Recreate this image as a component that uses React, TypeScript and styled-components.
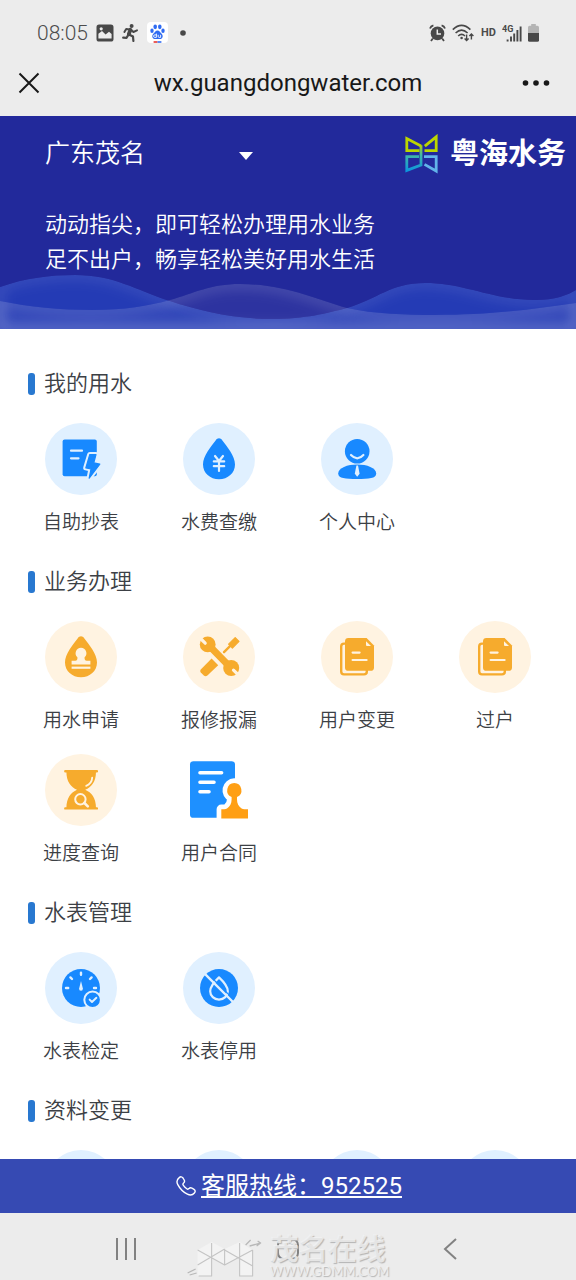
import React from 'react';
import styled, { createGlobalStyle } from 'styled-components';

const BLUE = '#1889ff';
const BLUE_BG = '#e0f0ff';
const ORANGE = '#f6ab2d';
const ORANGE_BG = '#fff3e1';

const GlobalStyle = createGlobalStyle`
  * { box-sizing: border-box; }
  body {
    margin: 0;
    background: #fff;
    color: #3c4045;
    font-family: Roboto, "Noto Sans CJK SC", sans-serif;
  }
  button, select { font: inherit; color: inherit; background: none; border: 0; padding: 0; margin: 0; }
  svg { display: block; }
`;

const Screen = styled.div`
  display: flex;
  flex-direction: column;
  height: 100vh;
  overflow: hidden;
`;

const StatusBar = styled.div`
  display: flex;
  justify-content: space-between;
  align-items: center;
  height: 50px;
  padding: 15px 37px 0;
  background: #ececec;
  color: #4c4c4c;
`;

const StatusGroup = styled.div<{ $gap: number }>`
  display: flex;
  align-items: center;
  gap: ${(p) => p.$gap}px;
`;

const Clock = styled.time`
  font-size: 21px;
  line-height: 24px;
  font-weight: 350;
`;

const HdLabel = styled.span`
  font-size: 11px;
  line-height: 16px;
  font-weight: 700;
`;

const TitleBar = styled.header`
  display: grid;
  grid-template-columns: 64px 1fr 64px;
  align-items: center;
  height: 66px;
  background: #ececec;
  color: #181818;
`;

const SiteTitle = styled.h1`
  margin: 0;
  font-size: 24px;
  line-height: 32px;
  font-weight: 400;
  text-align: center;
`;

const IconButton = styled.button`
  display: flex;
  align-items: center;
  justify-content: center;
`;

const CloseButton = styled(IconButton)`
  justify-content: flex-start;
  padding-left: 17px;
`;

const MoreButton = styled(IconButton)`
  justify-content: flex-end;
  padding-right: 26px;
`;

const Banner = styled.section`
  position: relative;
  height: 213px;
  flex-shrink: 0;
  padding: 15px 10px 0 45px;
  background: #22299b;
  color: #fff;
`;

const BannerTop = styled.div`
  display: flex;
  align-items: center;
  justify-content: space-between;
  height: 46px;
`;

const CityPicker = styled.label`
  display: grid;
  grid-template-columns: 208px;
  align-items: center;
  justify-items: end;
  & > * { grid-area: 1 / 1; }
  & > svg { margin-top: 4px; }
`;

const CitySelect = styled.select`
  width: 100%;
  appearance: none;
  font-size: 25px;
  line-height: 36px;
  font-weight: 350;
`;

const Brand = styled.div`
  display: flex;
  align-items: center;
  gap: 12px;
  font-size: 29px;
  line-height: 40px;
  font-weight: 700;
`;

const Slogan = styled.p`
  margin: 30px 0 0;
  font-size: 22px;
  line-height: 35px;
  font-weight: 350;
`;

const Waves = styled.svg`
  position: absolute;
  left: 0;
  bottom: 0;
  width: 100%;
  height: 57px;
`;

const Content = styled.main`
  flex: 1;
  min-height: 0;
  overflow: hidden;
  padding: 29px 12px 0;
`;

const SectionTitle = styled.h2`
  display: flex;
  align-items: center;
  gap: 9px;
  margin: 0;
  padding: 10px 16px 23px;
  font-size: 22px;
  line-height: 32px;
  font-weight: 350;
  &::before {
    content: "";
    width: 7px;
    height: 22px;
    border-radius: 3px;
    background: #2878d0;
  }
`;

const ServiceGrid = styled.div`
  display: grid;
  grid-template-columns: repeat(4, 1fr);
`;

const Service = styled.button`
  display: flex;
  flex-direction: column;
  align-items: center;
  gap: 14px;
  height: 133px;
  font-size: 19px;
  line-height: 28px;
  font-weight: 350;
`;

const Disc = styled.span<{ $bg: string }>`
  width: 72px;
  height: 72px;
  border-radius: 50%;
  background: ${(p) => p.$bg};
`;

const Hotline = styled.footer`
  display: flex;
  align-items: center;
  justify-content: center;
  gap: 5px;
  height: 54px;
  flex-shrink: 0;
  padding-left: 2px;
  background: #364ab3;
  color: #fff;
`;

const HotlineLink = styled.a`
  color: inherit;
  font-size: 24px;
  line-height: 32px;
  font-weight: 400;
  text-decoration: underline;
  text-decoration-thickness: 2px;
  text-underline-offset: 2px;
  text-decoration-skip-ink: none;
`;

const NavBar = styled.nav`
  position: relative;
  display: grid;
  grid-template-columns: repeat(3, 1fr);
  height: 67px;
  flex-shrink: 0;
  padding: 4px 45px 0;
  background: #ececec;
`;

const Watermark = styled.div`
  position: absolute;
  left: 50%;
  bottom: 2px;
  transform: translateX(-50%);
  display: flex;
  align-items: flex-end;
  gap: 4px;
  color: rgba(244, 244, 244, 0.75);
  text-shadow: 1px 1px 1px #b4b4b4;
  pointer-events: none;
`;

const WatermarkText = styled.div`
  display: flex;
  flex-direction: column;
  font-size: 29px;
  line-height: 28px;
  font-weight: 700;
  white-space: nowrap;
`;

const WatermarkUrl = styled.span`
  font-family: Lato, sans-serif;
  font-size: 13px;
  line-height: 14px;
  font-weight: 400;
`;

const Glyph = ({ children }: { children: React.ReactNode }) => (
  <svg width="72" height="72" viewBox="0 0 72 72" fill="none" strokeLinecap="round" strokeLinejoin="round" aria-hidden="true">
    {children}
  </svg>
);

const DROP = 'M36 15.3C37.3 15.3 38.3 16 39.2 17.2C44 23.5 52 33 52 41.5C52 50 44.8 56.3 36 56.3S20 50 20 41.5C20 33 28 23.5 32.8 17.2C33.7 16 34.7 15.3 36 15.3Z';
const BOLT = 'M44.8 31.5H51L48.8 39.8L54.8 41.2L44.2 55.2L46 46L40.8 44.8Z';

const ReadMeterIcon = () => (
  <Glyph>
    <rect x="17.6" y="16.6" width="34.2" height="36.6" rx="2" fill={BLUE} />
    <path d="M26 27.7H37M26 35.3H33.5" stroke={BLUE_BG} strokeWidth="2.2" />
    <path d={BOLT} stroke={BLUE_BG} strokeWidth="5.2" fill={BLUE_BG} />
    <path d={BOLT} fill={BLUE} stroke={BLUE} strokeWidth="1.2" />
  </Glyph>
);

const BillIcon = () => (
  <Glyph>
    <path d={DROP} fill={BLUE} />
    <path d="M32 33L36 38L40 33M30.8 38.4H41.2M30.8 43.2H41.2M36 38V48" stroke={BLUE_BG} strokeWidth="2.2" />
  </Glyph>
);

const PersonIcon = () => (
  <Glyph>
    <circle cx="36.2" cy="28.2" r="12.3" fill={BLUE} />
    <path d="M30 32Q36.3 38.6 42.4 32" stroke={BLUE_BG} strokeWidth="2.2" />
    <path d="M36.2 41.6C46 41.6 55.2 45 55.2 50.5C55.2 55.4 48 56 36.2 56S17.2 55.4 17.2 50.5C17.2 45 26.4 41.6 36.2 41.6Z" fill={BLUE} />
    <path d="M35.4 42.4H37L38.6 50.8L36.2 53.8L33.8 50.8Z" fill={BLUE_BG} />
  </Glyph>
);

const ApplyIcon = () => (
  <Glyph>
    <path d={DROP} fill={ORANGE} />
    <path d="M36 26.8A5.4 5.4 0 0 1 39.6 36.2V38Q39.8 39.8 41.6 39.8H45.4V43.4H26.6V39.8H30.4Q32.2 39.8 32.4 38V36.2A5.4 5.4 0 0 1 36 26.8Z" fill={ORANGE_BG} />
    <path d="M26.6 45.6H45.4V47.8H26.6Z" fill={ORANGE_BG} />
  </Glyph>
);

const RepairIcon = () => (
  <Glyph>
    <path d="M41 31.2L47 25.2" stroke={ORANGE} strokeWidth="2.4" />
    <path d="M45.6 23.2L52.2 16.6L56 20.4L49.4 27Z" fill={ORANGE} stroke={ORANGE} strokeWidth="1.2" />
    <path d="M28.6 37.6L35.2 44.2L24.4 54.6Q22.6 56 20.8 54.6L17.8 51.6Q16.4 50 17.8 48.4Z" fill={ORANGE} />
    <path d="M25 23.5L48 47" stroke={ORANGE_BG} strokeWidth="9.4" />
    <path d="M25 23.5L48 47" stroke={ORANGE} strokeWidth="6.8" />
    <circle cx="24.7" cy="23.4" r="7.9" fill={ORANGE} />
    <circle cx="48.2" cy="47" r="8" fill={ORANGE} />
    <path d="M16.5 16.5L22.2 22.2" stroke={ORANGE_BG} strokeWidth="3.2" />
    <path d="M50.5 49.2L56.5 55" stroke={ORANGE_BG} strokeWidth="3.2" />
  </Glyph>
);

const DocumentsIcon = () => (
  <Glyph>
    <path d="M24 22.6H23Q20.2 22.6 20.2 25.4V50.6Q20.2 53.4 23 53.4H43Q45.8 53.4 45.8 50.8V49" stroke={ORANGE} strokeWidth="2.4" />
    <path d="M27.4 17H45.6L53 24.4V46.4Q53 49.8 49.6 49.8H27.4Q24 49.8 24 46.4V20.4Q24 17 27.4 17Z" fill={ORANGE} />
    <path d="M45 20.2L50 25.1H46Q45 25.1 45 24.1Z" fill={ORANGE_BG} />
    <path d="M31.6 31.6H38.6M31.6 39H45.6" stroke={ORANGE_BG} strokeWidth="2.2" />
  </Glyph>
);

const ProgressIcon = () => (
  <Glyph>
    <path d="M20.3 17.2H51.9M20.3 54.4H51.9" stroke={ORANGE} strokeWidth="2.4" />
    <path d="M21.4 17.5H51C51 28 46.5 33 40.2 35.8C46.5 38.5 51 44 51 54H21.4C21.4 44 26 38.5 32 35.8C26 33 21.4 28 21.4 17.5Z" fill={ORANGE} />
    <path d="M47.2 23.6Q46.8 29.6 41.2 31.8" stroke={ORANGE_BG} strokeWidth="1.8" />
    <circle cx="35.4" cy="45.3" r="5.2" stroke={ORANGE_BG} strokeWidth="2" />
    <path d="M39.4 49L42.8 52.4" stroke={ORANGE_BG} strokeWidth="2.6" />
  </Glyph>
);

const SEAL = 'M51.3 29A7.3 7.3 0 0 1 54 43V45.5C54 49.5 55.6 52.4 58.6 54.4Q59.8 55.2 61.4 55.2H65V64.4H38.3V55.2H41.2Q42.8 55.2 44 54.4C47 52.4 48.6 49.5 48.6 45.5V43A7.3 7.3 0 0 1 51.3 29Z';

const ContractIcon = () => (
  <Glyph>
    <rect x="7" y="7.2" width="45" height="56.6" rx="3.4" fill="#1e90ff" />
    <path d="M17 18.7H38.6M17 28.2H31M17 37.8H26" stroke="#fff" strokeWidth="3.6" />
    <path d={SEAL} fill="#fff" stroke="#fff" strokeWidth="9.4" />
    <path d={SEAL} fill="#ff9f14" />
  </Glyph>
);

const GaugeIcon = () => (
  <Glyph>
    <circle cx="36" cy="36" r="19" fill={BLUE} />
    <path d="M36 20.6V22.8M25.4 25.4L27 27M46.6 25.4L45 27M21 36H23.2M49 36H51" stroke={BLUE_BG} strokeWidth="2.4" />
    <path d="M36 29L37.9 36.6Q38 38.8 36 38.8T34.1 36.6Z" fill={BLUE_BG} />
    <circle cx="47.6" cy="47.8" r="8.3" fill={BLUE} stroke={BLUE_BG} strokeWidth="2" />
    <path d="M44.6 47.6L47 50L51.4 45.8" stroke={BLUE_BG} strokeWidth="1.9" />
  </Glyph>
);

const DisableIcon = () => (
  <Glyph>
    <circle cx="36" cy="36" r="19" fill={BLUE} />
    <path d="M36 25.4C39 28.2 44.8 34.4 44.8 39.2A8.8 8.4 0 0 1 27.2 39.2C27.2 34.4 33 28.2 36 25.4Z" stroke={BLUE_BG} strokeWidth="2.2" />
    <path d="M25.2 22.2L50.6 47.4" stroke={BLUE} strokeWidth="1.2" strokeLinecap="butt" />
    <path d="M22.6 22.6L50 50" stroke={BLUE_BG} strokeWidth="2.4" />
  </Glyph>
);

type Item = { label: string; bg: string; icon?: React.ReactNode };
type Group = { title: string; items: Item[] };

const GROUPS: Group[] = [
  {
    title: '我的用水',
    items: [
      { label: '自助抄表', bg: BLUE_BG, icon: <ReadMeterIcon /> },
      { label: '水费查缴', bg: BLUE_BG, icon: <BillIcon /> },
      { label: '个人中心', bg: BLUE_BG, icon: <PersonIcon /> },
    ],
  },
  {
    title: '业务办理',
    items: [
      { label: '用水申请', bg: ORANGE_BG, icon: <ApplyIcon /> },
      { label: '报修报漏', bg: ORANGE_BG, icon: <RepairIcon /> },
      { label: '用户变更', bg: ORANGE_BG, icon: <DocumentsIcon /> },
      { label: '过户', bg: ORANGE_BG, icon: <DocumentsIcon /> },
      { label: '进度查询', bg: ORANGE_BG, icon: <ProgressIcon /> },
      { label: '用户合同', bg: 'transparent', icon: <ContractIcon /> },
    ],
  },
  {
    title: '水表管理',
    items: [
      { label: '水表检定', bg: BLUE_BG, icon: <GaugeIcon /> },
      { label: '水表停用', bg: BLUE_BG, icon: <DisableIcon /> },
    ],
  },
  {
    title: '资料变更',
    items: [
      { label: '', bg: BLUE_BG },
      { label: '', bg: BLUE_BG },
      { label: '', bg: BLUE_BG },
      { label: '', bg: BLUE_BG },
    ],
  },
];

const WAVE_A = 'M0 15C25 6 50 3 75 3C115 3 135 18 170 29C200 39 235 47 272 47C305 47 328 41 347 36C378 27 390 11 425 11C465 11 492 28 535 28C555 28 568 23 576 18V57H0Z';
const WAVE_B = 'M0 29C30 35 60 38 92 38C125 38 148 34 170 28C195 21 210 12 240 12C285 12 315 27 347 36C375 42 405 43 435 43C490 43 535 37 576 31V57H0Z';

const BannerWaves = () => (
  <Waves viewBox="0 0 576 57" preserveAspectRatio="none" aria-hidden="true">
    <defs>
      <filter id="soft" x="-10%" y="-50%" width="120%" height="200%">
        <feGaussianBlur stdDeviation="6" />
      </filter>
      <clipPath id="clipA"><path d={WAVE_A} /></clipPath>
      <clipPath id="clipB"><path d={WAVE_B} /></clipPath>
    </defs>
    <g clipPath="url(#clipA)">
      <path d={WAVE_A} fill="#2640bc" fillOpacity=".8" />
      <path d={WAVE_A} fill="none" stroke="#fff" strokeOpacity=".1" strokeWidth="9" filter="url(#soft)" />
    </g>
    <g clipPath="url(#clipB)">
      <path d={WAVE_B} fill="#fff" fillOpacity=".05" />
      <path d={WAVE_B} fill="none" stroke="#fff" strokeOpacity=".12" strokeWidth="12" filter="url(#soft)" />
    </g>
  </Waves>
);

const BrandMark = () => (
  <svg width="33" height="40" viewBox="0 0 33 40" fill="none" strokeWidth="2.8" aria-hidden="true">
    <defs>
      <linearGradient id="stem" gradientUnits="userSpaceOnUse" x1="0" y1="10" x2="0" y2="38">
        <stop offset="0" stopColor="#b9d400" />
        <stop offset=".4" stopColor="#3fb6a8" />
        <stop offset="1" stopColor="#0a94e0" />
      </linearGradient>
    </defs>
    <path d="M19.5 16.6H31.2V2.8L19.8 12.2" stroke="#bcd600" />
    <path d="M19 22.6H31.2V37L19.5 30.4" stroke="#62b4ea" />
    <path d="M16 11.2V31L1.8 36.4V22.6H14" stroke="url(#stem)" />
    <path d="M14.5 16.6H1.8V4.6L16 12" stroke="#bcd600" />
  </svg>
);

const PictureIcon = () => (
  <svg width="18" height="18" viewBox="0 0 18 18" aria-hidden="true">
    <rect x=".5" y=".5" width="17" height="17" rx="2.6" fill="#484848" />
    <path d="M2.4 14.4V9.8L6 7L9.6 10.6L13 7.8L15.6 10V14.4Z" fill="#ececec" />
    <circle cx="5.2" cy="4.8" r="1.6" fill="#ececec" />
  </svg>
);

const RunnerIcon = () => (
  <svg width="17" height="18" viewBox="0 0 17 18" fill="none" stroke="#484848" strokeLinecap="round" strokeLinejoin="round" aria-hidden="true">
    <circle cx="9.6" cy="2" r="2" fill="#484848" stroke="none" />
    <path d="M8.4 5.8L6.8 10.2" strokeWidth="3.8" />
    <path d="M7.8 5.4L4.2 5L2.4 8M9.4 6.2L11.4 8L15 6.4" strokeWidth="2" />
    <path d="M7.4 10.8L11 12.6L11.4 17M6.2 11L4.6 13.8L1.2 13.6" strokeWidth="2.2" />
  </svg>
);

const PawIcon = () => (
  <svg width="21" height="21" viewBox="0 0 21 21" aria-hidden="true">
    <rect width="21" height="21" rx="4" fill="#fff" />
    <g fill="#2f6bf2">
      <ellipse cx="8.2" cy="4.8" rx="1.8" ry="2.4" />
      <ellipse cx="12.8" cy="4.8" rx="1.8" ry="2.4" />
      <ellipse cx="5" cy="8.8" rx="1.7" ry="2.2" />
      <ellipse cx="16" cy="8.8" rx="1.7" ry="2.2" />
      <path d="M10.5 8.4C12.4 8.4 13 10.2 14.4 11.4C16.6 13.2 16 17 12.8 17H8.2C5 17 4.4 13.2 6.6 11.4C8 10.2 8.6 8.4 10.5 8.4Z" />
    </g>
    <path d="M9.4 11.6V15.4H7.8A1.2 1.2 0 0 1 7.8 12.9H9.4M11.2 12.8V14.4Q11.2 15.4 12.2 15.4H13.6V12.8" fill="none" stroke="#fff" strokeWidth=".9" />
    <path d="M6.6 20H10.5" stroke="#e8352e" strokeWidth="1.6" />
    <path d="M10.5 20H14.4" stroke="#2f6bf2" strokeWidth="1.6" />
  </svg>
);

const DotIcon = () => (
  <svg width="10" height="6" viewBox="0 0 10 6" aria-hidden="true"><circle cx="7" cy="3" r="2.8" fill="#484848" /></svg>
);

const AlarmIcon = () => (
  <svg width="17" height="18" viewBox="0 0 17 18" fill="none" stroke="#484848" aria-hidden="true">
    <circle cx="8.5" cy="9.4" r="6.8" fill="#484848" stroke="none" />
    <path d="M1 4.6Q1.8 2 4.4 1.4M16 4.6Q15.2 2 12.6 1.4M3.8 14.4L2 17M13.2 14.4L15 17" strokeWidth="1.8" />
    <path d="M8.3 5.4V10H12" stroke="#ececec" strokeWidth="1.5" />
  </svg>
);

const WifiIcon = () => (
  <svg width="23" height="18" viewBox="0 0 23 18" fill="none" stroke="#484848" aria-hidden="true">
    <path d="M.8 5.6Q9.6 -2.8 18.4 5.6M3.6 9Q9.6 3.4 15.6 9M6.2 12Q9.6 8.8 13 12" strokeWidth="1.6" />
    <circle cx="9.6" cy="14" r="1.3" fill="#484848" stroke="none" />
    <path d="M14.6 10.6V16.4M12.6 14.4L14.6 16.4L16.6 14.4M19.4 15.6V10M17.4 12L19.4 10L21.4 12" strokeWidth="1.4" />
  </svg>
);

const SignalIcon = () => (
  <svg width="20" height="18" viewBox="0 0 20 18" aria-hidden="true">
    <text x="0" y="8" fill="#484848" fontFamily="Roboto, sans-serif" fontSize="9" fontWeight="700">4G</text>
    <path d="M5.6 17.4V15.4M9 17.4V12.6M12.2 17.4V9.6M15.4 17.4V6M18.6 17.4V2.4" stroke="#484848" strokeWidth="1.9" />
  </svg>
);

const BatteryIcon = () => (
  <svg width="11" height="18" viewBox="0 0 11 18" aria-hidden="true">
    <path d="M3.2 0H7.8V1.8H9.4Q11 1.8 11 3.4V9H0V3.4Q0 1.8 1.6 1.8H3.2Z" fill="#b4b4b4" />
    <path d="M0 9H11V16.2Q11 17.8 9.4 17.8H1.6Q0 17.8 0 16.2Z" fill="#484848" />
  </svg>
);

const PhoneIcon = () => (
  <svg width="20" height="20" viewBox="0 0 20 20" fill="none" stroke="#fff" strokeWidth="1.4" strokeLinejoin="round" aria-hidden="true">
    <path d="M3.2 1.6C4.6 .4 6 .6 7 2L8.2 4C9 5.4 8.6 6.2 7.4 7.2C6.6 8 6.8 8.6 7.4 9.4C8.4 10.8 9.4 11.8 10.8 12.8C11.6 13.4 12.2 13.4 13 12.6C13.8 11.6 14.8 11.4 16 12.2L18 13.4C19.4 14.4 19.6 15.6 18.4 17C16.6 19.2 14 19.6 11.4 18.2C7.4 16.2 4 12.8 1.8 8.6C.4 6 1 3.4 3.2 1.6Z" />
  </svg>
);

const WatermarkLogo = () => (
  <svg width="79" height="40" viewBox="0 0 79 40" fill="none" strokeLinejoin="round" aria-hidden="true">
    <path d="M11 12L25 4L38 11L53 4L66 12V38H53V20L38 27L25 20V38H11Z" fill="#f3f3f3" />
    <path d="M11 27L38 11M11 12L38 27L66 12M38 11V27M25 5V38H12M53 5V38H66V12M38 12L66 28" stroke="#c4c4c4" strokeWidth="1.1" />
    <path d="M59 7L64 2M63 8L74 5M71 3L74 5L70 8M1 35L9 31M3 37L10 35" stroke="#b8b8b8" strokeWidth="1.3" />
  </svg>
);

export default function App() {
  return (
    <Screen>
      <GlobalStyle />
      <StatusBar>
        <StatusGroup $gap={8}>
          <Clock>08:05</Clock>
          <PictureIcon />
          <RunnerIcon />
          <PawIcon />
          <DotIcon />
        </StatusGroup>
        <StatusGroup $gap={6}>
          <AlarmIcon />
          <WifiIcon />
          <HdLabel>HD</HdLabel>
          <SignalIcon />
          <BatteryIcon />
        </StatusGroup>
      </StatusBar>

      <TitleBar>
        <CloseButton aria-label="关闭">
          <svg width="24" height="24" viewBox="0 0 24 24" stroke="#181818" strokeWidth="2" aria-hidden="true">
            <path d="M2.5 2.5L21.5 21.5M21.5 2.5L2.5 21.5" />
          </svg>
        </CloseButton>
        <SiteTitle>wx.guangdongwater.com</SiteTitle>
        <MoreButton aria-label="更多">
          <svg width="28" height="6" viewBox="0 0 28 6" fill="#181818" aria-hidden="true">
            <circle cx="3.5" cy="3" r="2.8" />
            <circle cx="14" cy="3" r="2.8" />
            <circle cx="24.5" cy="3" r="2.8" />
          </svg>
        </MoreButton>
      </TitleBar>

      <Banner>
        <BannerWaves />
        <BannerTop>
          <CityPicker>
            <CitySelect aria-label="城市">
              <option>广东茂名</option>
            </CitySelect>
            <svg width="14" height="8" viewBox="0 0 14 8" fill="#fff" aria-hidden="true"><path d="M0 0H14L7 8Z" /></svg>
          </CityPicker>
          <Brand>
            <BrandMark />
            粤海水务
          </Brand>
        </BannerTop>
        <Slogan>
          动动指尖，即可轻松办理用水业务
          <br />
          足不出户，畅享轻松美好用水生活
        </Slogan>
      </Banner>

      <Content>
        {GROUPS.map((group) => (
          <section key={group.title}>
            <SectionTitle>{group.title}</SectionTitle>
            <ServiceGrid>
              {group.items.map((item, i) => (
                <Service key={i}>
                  <Disc $bg={item.bg}>{item.icon}</Disc>
                  {item.label}
                </Service>
              ))}
            </ServiceGrid>
          </section>
        ))}
      </Content>

      <Hotline>
        <PhoneIcon />
        <HotlineLink href="tel:952525">客服热线：952525</HotlineLink>
      </Hotline>

      <NavBar>
        <IconButton aria-label="最近任务">
          <svg width="22" height="22" viewBox="0 0 22 22" stroke="#828282" strokeWidth="2" aria-hidden="true">
            <path d="M2 0V22M11 0V22M20 0V22" />
          </svg>
        </IconButton>
        <IconButton aria-label="主页">
          <svg width="22" height="22" viewBox="0 0 22 22" fill="none" stroke="#828282" strokeWidth="2" aria-hidden="true">
            <rect x="1" y="1" width="20" height="20" rx="6" />
          </svg>
        </IconButton>
        <IconButton aria-label="返回">
          <svg width="14" height="22" viewBox="0 0 14 22" fill="none" stroke="#828282" strokeWidth="2" aria-hidden="true">
            <path d="M13 1L2 11L13 21" />
          </svg>
        </IconButton>
        <Watermark>
          <WatermarkLogo />
          <WatermarkText>
            茂名在线
            <WatermarkUrl>WWW.GDMM.COM</WatermarkUrl>
          </WatermarkText>
        </Watermark>
      </NavBar>
    </Screen>
  );
}
